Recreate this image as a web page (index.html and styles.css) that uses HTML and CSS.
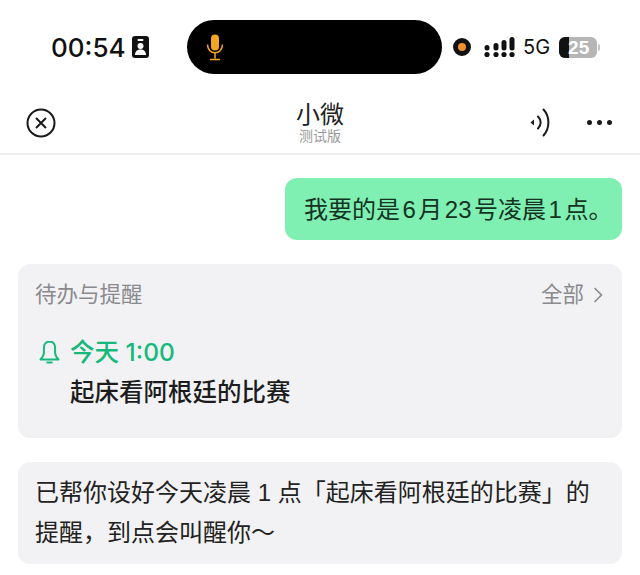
FILE: index.html
```html
<!DOCTYPE html>
<html lang="zh-CN">
<head>
    <meta charset="UTF-8">
    <meta name="viewport" content="width=device-width, initial-scale=1.0">
    <title>小微</title>
    <link rel="stylesheet" href="styles.css">
</head>
<body>
    <div class="status-bar">
        <div class="status-left">
            <span class="clock">00:54</span>
            <svg class="badge-icon" width="17" height="22" viewBox="0 0 17 22">
                <rect x="0" y="0" width="17" height="22" rx="3" fill="#111"/>
                <rect x="5.500" y="3" width="6" height="2" rx="1" fill="#fff"/>
                <circle cx="8.500" cy="10" r="3" fill="#fff"/>
                <path d="M3 19c0-3.700 2.500-5.500 5.500-5.500s5.500 1.800 5.500 5.500z" fill="#fff"/>
            </svg>
        </div>
        <div class="island">
            <svg width="18" height="27" viewBox="0 0 18 27">
                <rect x="5" y="0.500" width="8" height="16" rx="4" fill="#f3a626"/>
                <path d="M1.500 10.500c0 4.800 3.200 8.200 7.500 8.200s7.500-3.400 7.500-8.200M9 18.700v5.800M4 25.500h10" fill="none" stroke="#f3a626" stroke-width="1.500"/>
            </svg>
        </div>
        <div class="status-right">
            <span class="rec-dot"></span>
            <svg class="signal" width="31" height="21" viewBox="0 0 31 21">
                <g fill="#111">
                    <circle cx="3" cy="17.500" r="2.600"/><circle cx="12" cy="17.500" r="2.600"/><circle cx="20" cy="17.500" r="2.600"/><circle cx="28" cy="17.500" r="2.600"/>
                    <rect x="0.500" y="8" width="5" height="5.500" rx="2.500"/>
                    <rect x="9.500" y="6" width="5" height="7.500" rx="2.500"/>
                    <rect x="17.500" y="3" width="5" height="10.500" rx="2.500"/>
                    <rect x="25.500" y="0" width="5" height="13.500" rx="2.500"/>
                </g>
            </svg>
            <span class="net">5G</span>
            <div class="battery">
                <span class="battery-level"></span>
                <span class="battery-text">25</span>
            </div>
            <span class="battery-cap"></span>
        </div>
    </div>

    <div class="nav-bar">
        <svg class="nav-close" width="30" height="30" viewBox="0 0 30 30">
            <circle cx="15" cy="15" r="13.500" fill="none" stroke="#1a1a1a" stroke-width="2"/>
            <path d="M10 10l10 10M20 10l-10 10" fill="none" stroke="#1a1a1a" stroke-width="2"/>
        </svg>
        <div class="nav-title">
            <div class="nav-name">小微</div>
            <div class="nav-sub">测试版</div>
        </div>
        <div class="nav-actions">
            <svg width="21" height="29" viewBox="0 0 21 29">
                <path d="M0.500 14.500l3.500-3v6z" fill="#1a1a1a"/>
                <path d="M8 8.500c3.500 3.500 3.500 8.500 0 12M13.500 1.500c6.500 7 6.500 19 0 26" fill="none" stroke="#1a1a1a" stroke-width="2" stroke-linecap="round"/>
            </svg>
            <div class="dots"><span></span><span></span><span></span></div>
        </div>
    </div>

    <div class="chat">
        <div class="bubble-user">我要的是<span class="num">6</span>月<span class="num">23</span>号凌晨<span class="num">1</span>点。</div>

        <div class="card">
            <div class="card-head">
                <span>待办与提醒</span>
                <span class="card-all">全部
                    <svg width="10" height="16" viewBox="0 0 10 16"><path d="M1.500 1l7 7-7 7" fill="none" stroke="#8a8a8e" stroke-width="1.600"/></svg>
                </span>
            </div>
            <div class="todo-time">
                <svg width="21" height="25" viewBox="0 0 21 25">
                    <path d="M10.500 1.500c-3.800 0-5.600 3-5.600 6.500v5c0 2.500-1.600 4.500-3.400 6.500h18c-1.800-2-3.400-4-3.400-6.500v-5c0-3.500-1.800-6.500-5.600-6.500zM7.500 22.500h6" fill="none" stroke="#16b97c" stroke-width="2" stroke-linejoin="round"/>
                </svg>
                <span>今天 1:00</span>
            </div>
            <div class="todo-text">起床看阿根廷的比赛</div>
        </div>

        <div class="bubble-bot">已帮你设好今天凌晨 1 点「起床看阿根廷的比赛」的<br>提醒，到点会叫醒你～</div>
    </div>
</body>
</html>
```
FILE: styles.css
```css
* {
    box-sizing: border-box;
}

body {
    margin: 0;
    width: 640px;
    height: 575px;
    overflow: hidden;
    background-color: #ffffff;
    font-family: "Liberation Sans", "Noto Sans CJK SC", sans-serif;
    color: #1a1a1a;
}

.status-bar {
    height: 95px;
    display: flex;
    align-items: flex-start;
    padding-top: 20px;
}

.status-left {
    width: 187px;
    height: 54px;
    display: flex;
    align-items: center;
    padding-left: 51px;
    gap: 6px;
}

.clock {
    font-size: 26px;
    color: #111111;
    font-family: "Inter", sans-serif;
    font-weight: 500;
}

.island {
    width: 255px;
    height: 54px;
    background-color: #000000;
    border-radius: 27px;
    display: flex;
    align-items: center;
    padding-left: 19px;
}

.status-right {
    height: 54px;
    display: flex;
    align-items: center;
    padding-left: 11px;
}

.rec-dot {
    width: 18px;
    height: 18px;
    border-radius: 50%;
    background-color: #f0912f;
    border: 5px solid #111111;
    margin-right: 13px;
}

.signal {
    margin-right: 8px;
}

.net {
    font-size: 20px;
    color: #111111;
    font-family: "Inter", sans-serif;
    margin-right: 9px;
}

.battery {
    position: relative;
    width: 38px;
    height: 21px;
    border-radius: 6px;
    background-color: #b5b5b5;
    overflow: hidden;
}

.battery-level {
    display: block;
    width: 10px;
    height: 21px;
    background-color: #111111;
}

.battery-text {
    position: absolute;
    left: 9px;
    top: 0;
    font-size: 19px;
    line-height: 21px;
    font-weight: bold;
    color: #ffffff;
}

.battery-cap {
    width: 2px;
    height: 7px;
    margin-left: 1px;
    background-color: #c4c4c4;
    border-radius: 0 2px 2px 0;
}

.nav-bar {
    height: 60px;
    display: flex;
    align-items: center;
    justify-content: space-between;
    padding: 0 28px 3px 26px;
    border-bottom: 2px solid #f0f0f0;
    position: relative;
}

.nav-title {
    position: absolute;
    left: 0;
    right: 0;
    top: 6px;
    text-align: center;
}

.nav-name {
    font-size: 24px;
    line-height: 27px;
    color: #222222;
}

.nav-sub {
    font-size: 14px;
    line-height: 16px;
    color: #9a9a9a;
}

.nav-actions {
    display: flex;
    align-items: center;
    gap: 36px;
}

.dots {
    display: flex;
    gap: 5px;
}

.dots span {
    width: 5px;
    height: 5px;
    border-radius: 50%;
    background-color: #1a1a1a;
}

.chat {
    padding: 23px 18px 0;
    display: flex;
    flex-direction: column;
    gap: 24px;
}

.bubble-user {
    align-self: flex-end;
    width: 337px;
    height: 62px;
    background-color: #7fefb2;
    border-radius: 12px;
    font-size: 24px;
    line-height: 62px;
    padding: 1px 0 0 19px;
    color: #143322;
    white-space: nowrap;
}

.num {
    margin: 0 2.500px;
}

.card {
    height: 174px;
    background-color: #f2f2f4;
    border-radius: 12px;
    padding: 16px 19px 0 17px;
}

.card-head {
    display: flex;
    justify-content: space-between;
    font-size: 21.500px;
    line-height: 30px;
    color: #8a8a8e;
}

.card-all {
    display: flex;
    align-items: center;
    gap: 9px;
}

.todo-time {
    margin-top: 26px;
    display: flex;
    align-items: center;
    gap: 10px;
    padding-left: 4px;
    font-family: "Inter", "Noto Sans CJK SC", sans-serif;
    font-size: 24.500px;
    line-height: 32px;
    font-weight: 500;
    color: #16b97c;
}

.todo-text {
    margin-top: 9px;
    padding-left: 35px;
    font-size: 24.500px;
    line-height: 32px;
    font-weight: 500;
    color: #1c1c1c;
}

.bubble-bot {
    height: 102px;
    background-color: #f2f2f4;
    border-radius: 12px;
    padding: 11px 17px 0;
    font-size: 24px;
    line-height: 40px;
    color: #222222;
    white-space: nowrap;
}
```
